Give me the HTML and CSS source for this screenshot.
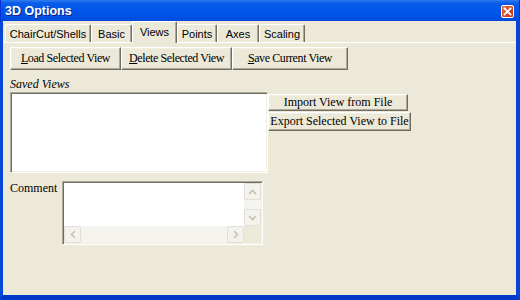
FILE: index.html
```html
<!DOCTYPE html>
<html lang="en">
<head>
    <meta charset="UTF-8">
    <title>3D Options</title>
    <link rel="stylesheet" href="styles.css">
</head>
<body>
    <div class="window">
        <div class="titlebar">
            <span class="title">3D Options</span>
            <span class="close">
                <svg width="13" height="13" viewBox="0 0 13 13">
                    <path d="M3.5 3.5 L9.5 9.5 M9.5 3.5 L3.5 9.5" stroke="#fff" stroke-width="1.8" stroke-linecap="square"/>
                </svg>
            </span>
        </div>
        <div class="frame">
            <div class="tabs">
                <span class="tab tab-chair">ChairCut/Shells</span>
                <span class="tab tab-basic">Basic</span>
                <span class="tab tab-views selected">Views</span>
                <span class="tab tab-points">Points</span>
                <span class="tab tab-axes">Axes</span>
                <span class="tab tab-scaling">Scaling</span>
            </div>
            <div class="panel">
                <div class="btn-row">
                    <button class="btn btn-load"><u>L</u>oad Selected View</button>
                    <button class="btn btn-delete"><u>D</u>elete Selected View</button>
                    <button class="btn btn-save"><u>S</u>ave Current View</button>
                </div>
                <div class="saved-label">Saved Views</div>
                <div class="views-row">
                    <div class="listbox"></div>
                    <div class="side-buttons">
                        <button class="btn btn-import">Import View from File</button>
                        <button class="btn btn-export">Export Selected View to File</button>
                    </div>
                </div>
                <div class="comment-row">
                    <span class="comment-label">Comment</span>
                    <div class="memo">
                        <div class="memo-top">
                            <div class="memo-text"></div>
                            <div class="vscroll">
                                <span class="sb-btn">
                                    <svg width="9" height="6" viewBox="0 0 9 6"><path d="M1 5 L4.5 1.5 L8 5" fill="none" stroke="#c4c2b4" stroke-width="1.6"/></svg>
                                </span>
                                <span class="sb-track"></span>
                                <span class="sb-btn">
                                    <svg width="9" height="6" viewBox="0 0 9 6"><path d="M1 1 L4.5 4.5 L8 1" fill="none" stroke="#c4c2b4" stroke-width="1.6"/></svg>
                                </span>
                            </div>
                        </div>
                        <div class="hscroll">
                            <span class="sb-btn">
                                <svg width="6" height="9" viewBox="0 0 6 9"><path d="M5 1 L1.5 4.5 L5 8" fill="none" stroke="#c4c2b4" stroke-width="1.6"/></svg>
                            </span>
                            <span class="sb-track"></span>
                            <span class="sb-btn">
                                <svg width="6" height="9" viewBox="0 0 6 9"><path d="M1 1 L4.5 4.5 L1 8" fill="none" stroke="#c4c2b4" stroke-width="1.6"/></svg>
                            </span>
                            <span class="sb-corner"></span>
                        </div>
                    </div>
                </div>
            </div>
        </div>
    </div>
</body>
</html>
```

FILE: styles.css
```css
body {
    margin: 0;
    padding: 0;
    background: #ece9d8;
}
.window {
    width: 520px;
    height: 300px;
    display: flex;
    flex-direction: column;
    box-sizing: border-box;
}
.titlebar {
    height: 21px;
    flex: none;
    display: flex;
    align-items: center;
    justify-content: space-between;
    padding: 1px 5px 0 4px;
    box-sizing: border-box;
    background: linear-gradient(#2f7df2 0, #0a5de8 3px, #0058ea 40%, #0052e4 80%, #0048da 100%);
    border-left: 1px solid #0831d9;
    border-right: 1px solid #0831d9;
}
.title {
    font-family: 'Liberation Sans', Arial, sans-serif;
    font-weight: bold;
    font-size: 12.5px;
    color: #fff;
    text-shadow: 1px 1px 0 #0a1e8c;
}
.close {
    width: 13px;
    height: 13px;
    box-sizing: border-box;
    border: 1px solid #fff;
    border-radius: 2px;
    background: linear-gradient(135deg, #e7704f, #d9441c 60%, #c33410);
    display: flex;
}
.close svg {
    margin: -1px;
}
.frame {
    flex: 1;
    display: flex;
    flex-direction: column;
    border-style: solid;
    border-width: 0 4px 5px 3px;
    border-color: #0848d9 #0644d6 #0038c8 #0848d9;
    background: #ece9d8;
    font-family: 'Liberation Serif', 'Times New Roman', serif;
    font-size: 12px;
    color: #000;
}
.tabs {
    height: 21px;
    display: flex;
    align-items: flex-end;
    padding-left: 2px;
    position: relative;
    z-index: 1;
}
.tab {
    height: 18px;
    box-sizing: border-box;
    display: flex;
    align-items: center;
    justify-content: center;
    font-family: 'Liberation Sans', Arial, sans-serif;
    font-size: 11px;
    border-top: 1px solid #fff;
    border-left: 1px solid #fff;
    border-right: 1px solid #716f64;
    border-radius: 2px 2px 0 0;
    box-shadow: inset -1px 0 0 #aca899;
    padding-top: 1px;
}
.tab.selected {
    height: 22px;
    margin-bottom: -1px;
    background: #ece9d8;
    padding-bottom: 3px;
}
.tab-chair { width: 86px; }
.tab-basic { width: 41px; }
.tab-views { width: 45px; }
.tab-points { width: 40px; }
.tab-axes { width: 42px; }
.tab-scaling { width: 46px; }
.panel {
    flex: 1;
    border-top: 1px solid #fff;
    padding: 4px 0 0 7px;
}
.btn {
    box-sizing: border-box;
    background: #ece9d8;
    font-family: 'Liberation Serif', 'Times New Roman', serif;
    font-size: 12px;
    color: #000;
    padding: 0;
    border: 1px solid;
    border-color: #fff #716f64 #716f64 #fff;
    box-shadow: inset -1px -1px 0 #aca899, inset 1px 1px 0 #f1efe2;
}
.btn-row {
    display: flex;
    height: 23px;
}
.btn-row .btn {
    letter-spacing: -0.4px;
}
.btn-load { width: 111px; }
.btn-delete { width: 111px; }
.btn-save { width: 116px; }
.saved-label {
    font-style: italic;
    height: 15px;
    line-height: 15px;
    margin-top: 7px;
}
.views-row {
    display: flex;
    align-items: flex-start;
}
.listbox {
    width: 258px;
    height: 81px;
    box-sizing: border-box;
    background: #fff;
    border: 1px solid;
    border-color: #aca899 #fff #fff #aca899;
    box-shadow: inset 1px 1px 0 #716f64, inset -1px -1px 0 #f1efe2;
}
.side-buttons {
    display: flex;
    flex-direction: column;
    align-items: flex-start;
    gap: 1px;
    margin-top: 2px;
}
.btn-import { width: 140px; height: 17px; }
.btn-export { width: 143px; height: 19px; }
.comment-row {
    display: flex;
    margin-top: 8px;
}
.comment-label {
    width: 52px;
    line-height: 14px;
}
.memo {
    width: 201px;
    height: 64px;
    box-sizing: border-box;
    display: flex;
    flex-direction: column;
    background: #fff;
    border: 1px solid;
    border-color: #aca899 #fff #fff #aca899;
    box-shadow: inset 1px 1px 0 #716f64, inset -1px -1px 0 #f1efe2;
    padding: 1px;
}
.memo-top {
    flex: 1;
    display: flex;
}
.memo-text {
    flex: 1;
}
.vscroll {
    width: 17px;
    display: flex;
    flex-direction: column;
    background: #f4f3ee;
}
.hscroll {
    height: 17px;
    display: flex;
    background: #f4f3ee;
}
.sb-btn {
    width: 17px;
    height: 17px;
    box-sizing: border-box;
    flex: none;
    display: flex;
    align-items: center;
    justify-content: center;
    background: #f3f2ec;
    border: 1px solid #e2e0d6;
    border-radius: 2px;
}
.sb-track {
    flex: 1;
}
.sb-corner {
    width: 17px;
    flex: none;
    background: #ece9d8;
}
```
